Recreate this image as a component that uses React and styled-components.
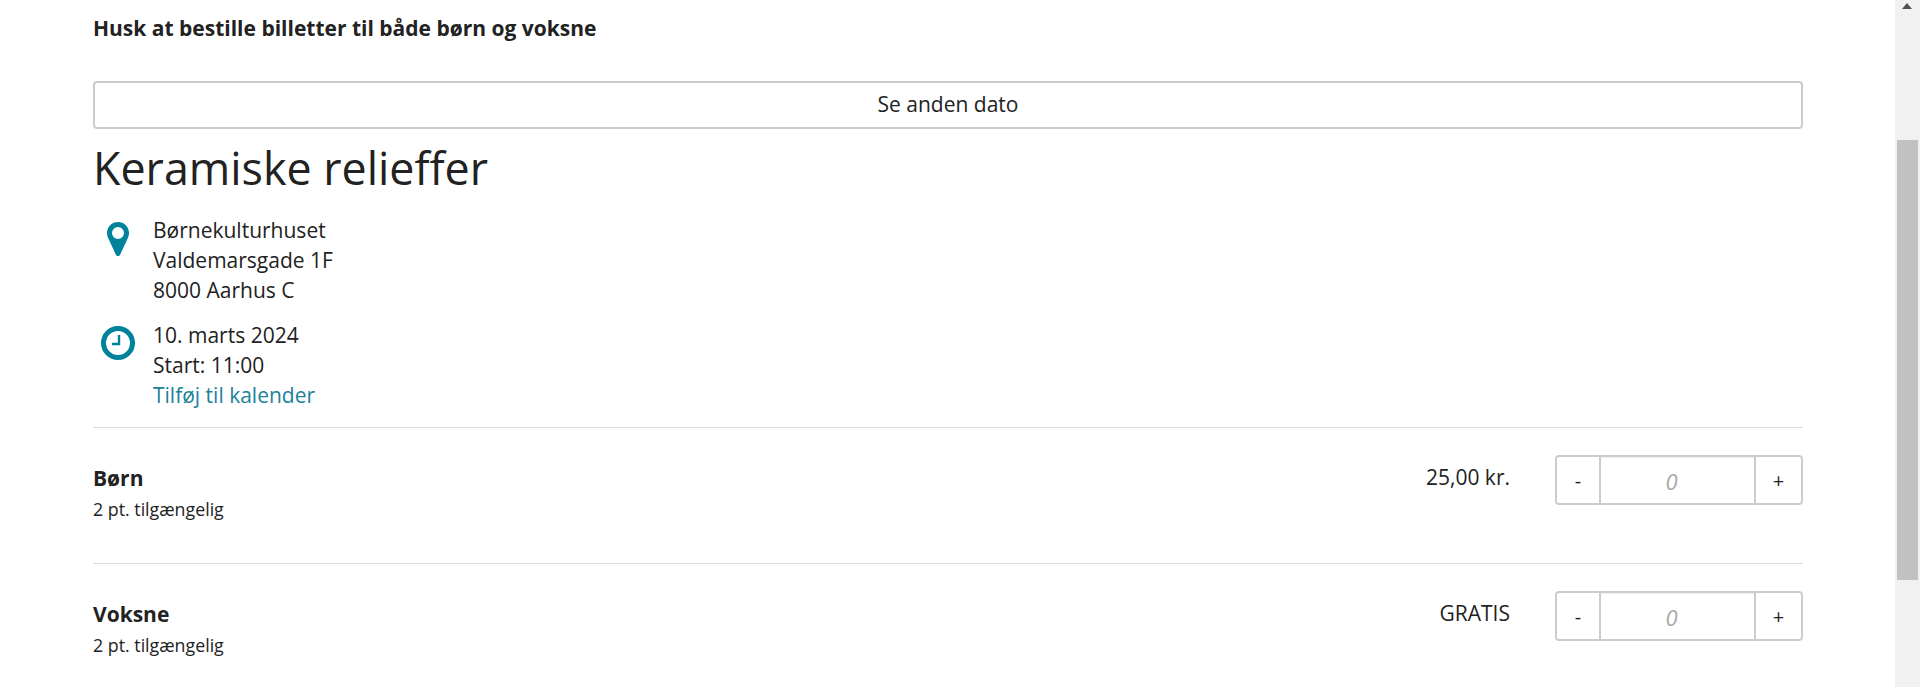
import React from "react";
import styled, { createGlobalStyle } from "styled-components";

const GlobalStyle = createGlobalStyle`
  html, body {
    margin: 0;
    padding: 0;
    height: 100%;
    overflow: hidden;
    background: #fff;
  }
  body {
    font-family: "Open Sans", "Liberation Sans", sans-serif;
    color: #222;
  }
`;

const Page = styled.div`
  display: flex;
  height: 687px;
  overflow: hidden;
`;

const Main = styled.main`
  flex: 1;
  padding: 0 92px 0 93px;
`;

const Notice = styled.p`
  margin: 0;
  padding-top: 15px;
  font-size: 21px;
  line-height: 27px;
  font-weight: 700;
`;

const DateButton = styled.button`
  display: block;
  width: 100%;
  height: 48px;
  margin-top: 39px;
  padding: 0 0 2px;
  background: #fff;
  border: 2px solid #ccc;
  border-radius: 4px;
  font: inherit;
  font-size: 21px;
  color: #222;
`;

const Title = styled.h1`
  margin: 13px 0 0;
  font-size: 44.8px;
  line-height: 52px;
  font-weight: 400;
`;

const InfoRow = styled.div`
  display: grid;
  grid-template-columns: 60px 1fr;
  margin-top: ${(p) => p.$gap}px;
  font-size: 21px;
  line-height: 30px;
`;

const IconCell = styled.div`
  display: flex;
  justify-content: center;
  padding: ${(p) => p.$top}px 10px 0 0;
  svg {
    display: block;
  }
`;

const Lines = styled.div`
  display: flex;
  flex-direction: column;
`;

const CalendarLink = styled.a`
  color: #1b8299;
  text-decoration: none;
`;

const TicketRow = styled.section`
  display: flex;
  justify-content: space-between;
  height: 135px;
  border-top: 1px solid #ddd;
  &:first-of-type {
    margin-top: 17px;
  }
`;

const TicketInfo = styled.div`
  padding-top: 35px;
`;

const TicketName = styled.div`
  font-size: 21px;
  line-height: 30px;
  font-weight: 700;
`;

const TicketStock = styled.div`
  font-size: 17.8px;
  line-height: 32px;
`;

const TicketBuy = styled.div`
  display: flex;
  align-items: flex-start;
  padding-top: 27px;
`;

const Price = styled.div`
  margin-right: 45px;
  font-size: 21px;
  line-height: 50px;
  margin-top: -3px;
`;

const Stepper = styled.div`
  display: flex;
  width: 248px;
  height: 50px;
  box-sizing: border-box;
  border: 2px solid #ccc;
  border-radius: 4px;
`;

const StepButton = styled.button`
  flex: 0 0 ${(p) => p.$width}px;
  padding: 0;
  background: #fff;
  border: 0;
  border-radius: 4px;
  font: inherit;
  font-size: 20px;
  color: #222;
`;

const Quantity = styled.input`
  flex: 1;
  min-width: 0;
  box-sizing: border-box;
  padding: 1px 12px 0 0;
  border: 0;
  border-left: 2px solid #ccc;
  border-right: 2px solid #ccc;
  box-shadow: inset 0 1px 1px rgba(0, 0, 0, 0.075);
  outline: 0;
  font: inherit;
  font-size: 22px;
  font-style: italic;
  text-align: center;
  &::placeholder {
    color: #aaa;
    opacity: 1;
  }
`;

const Scrollbar = styled.aside`
  position: relative;
  flex: 0 0 25px;
  background: #f1f1f1;
`;

const ScrollArrow = styled.div`
  position: absolute;
  top: 3px;
  left: 7px;
  width: 0;
  height: 0;
  border-left: 5.5px solid transparent;
  border-right: 5.5px solid transparent;
  border-bottom: 6px solid #505050;
`;

const ScrollThumb = styled.div`
  position: absolute;
  top: 140px;
  left: 2px;
  width: 21px;
  height: 440px;
  background: #c1c1c1;
`;

const PinIcon = () => (
  <svg width="22" height="34" viewBox="0 0 22 34" aria-hidden="true">
    <path
      fill="#00829b"
      fillRule="evenodd"
      d="M11 0C4.9 0 0 4.9 0 11c0 1.7.4 3.2 1 4.7l7.8 16.8c.9 2 3.5 2 4.4 0L21 15.7c.6-1.5 1-3 1-4.7C22 4.9 17.1 0 11 0zm0 5a6 6 0 1 1 0 12 6 6 0 0 1 0-12z"
    />
  </svg>
);

const ClockIcon = () => (
  <svg width="34" height="34" viewBox="0 0 34 34" aria-hidden="true">
    <circle cx="17" cy="17" r="14.5" fill="none" stroke="#00829b" strokeWidth="5" />
    <path d="M18 9v9h-7" fill="none" stroke="#00829b" strokeWidth="2.4" />
  </svg>
);

const tickets = [
  { name: "Børn", stock: "2 pt. tilgængelig", price: "25,00 kr." },
  { name: "Voksne", stock: "2 pt. tilgængelig", price: "GRATIS" },
];

export default function App() {
  return (
    <>
      <GlobalStyle />
      <Page>
        <Main>
          <Notice>Husk at bestille billetter til både børn og voksne</Notice>
          <DateButton type="button">Se anden dato</DateButton>
          <Title>Keramiske relieffer</Title>

          <InfoRow $gap={21}>
            <IconCell $top={7}>
              <PinIcon />
            </IconCell>
            <Lines>
              <span>Børnekulturhuset</span>
              <span>Valdemarsgade 1F</span>
              <span>8000 Aarhus C</span>
            </Lines>
          </InfoRow>

          <InfoRow $gap={15}>
            <IconCell $top={6}>
              <ClockIcon />
            </IconCell>
            <Lines>
              <span>10. marts 2024</span>
              <span>Start: 11:00</span>
              <CalendarLink href="#">Tilføj til kalender</CalendarLink>
            </Lines>
          </InfoRow>

          {tickets.map((t) => (
            <TicketRow key={t.name}>
              <TicketInfo>
                <TicketName>{t.name}</TicketName>
                <TicketStock>{t.stock}</TicketStock>
              </TicketInfo>
              <TicketBuy>
                <Price>{t.price}</Price>
                <Stepper>
                  <StepButton type="button" $width={42}>-</StepButton>
                  <Quantity placeholder="0" readOnly />
                  <StepButton type="button" $width={45}>+</StepButton>
                </Stepper>
              </TicketBuy>
            </TicketRow>
          ))}
        </Main>
        <Scrollbar>
          <ScrollArrow />
          <ScrollThumb />
        </Scrollbar>
      </Page>
    </>
  );
}
